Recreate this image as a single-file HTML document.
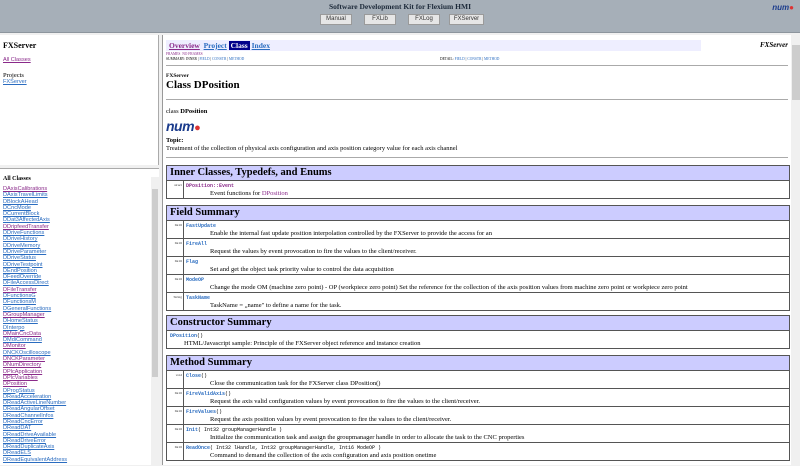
<!DOCTYPE html>
<html><head><meta charset="utf-8"><style>
*{margin:0;padding:0;box-sizing:border-box}
body{width:800px;height:465px;overflow:hidden;background:#f0f0f0;font-family:"Liberation Serif",serif;color:#000;position:relative}
a{color:#2a6cc0}
a.v{color:#8a2a8a}
#hdr{position:absolute;left:0;top:0;width:800px;height:33px;background:#a6afb8;border-bottom:1px solid #8d959d}
#hdr .t{position:absolute;left:0;width:800px;top:2px;text-align:center;font-size:7.5px;font-weight:bold;color:#1d2a3a}
.btn{position:absolute;top:14px;height:11px;width:32px;background:#e6e6e6;border:1px solid #9a9a9a;font-family:"Liberation Sans",sans-serif;font-size:6px;text-align:center;line-height:9px;color:#333}
#lt{position:absolute;left:0;top:35px;width:159px;height:130px;background:#fff;border-right:1px solid #aaa}
#lb{position:absolute;left:0;top:168px;width:159px;height:297px;background:#fff;border-top:1px solid #aaa}
#rt{position:absolute;left:162px;top:35px;width:638px;height:430px;background:#fff;border-left:1px solid #999}
.sb{position:absolute;background:#f0f0f0}
.th{position:absolute;background:#cdcdcd}
.cls{position:absolute;left:3px;top:17px;font-family:"Liberation Sans",sans-serif;font-size:5.6px;line-height:6.3px}
.cls div{color:#2a6cc0;text-decoration:underline}
.cls div.v{color:#8a2a8a}
table{border-collapse:collapse;width:624px;position:absolute;left:3px;background:#fff}
td{border:1.5px solid #555;font-size:6.5px;vertical-align:top}
td.h{background:#ccccff;font-size:10.5px;font-weight:bold;height:15px;padding:0 3px;line-height:14px}
td.k{width:17px;font-size:3.5px;text-align:right;padding:2px 1px;color:#333}
td.d{height:17px;padding:1px 2px;line-height:7px}
td.d .c{font-family:"Liberation Mono",monospace;font-size:5px}
td.d .c a{font-weight:bold}
td.d p{padding-left:24px;font-size:6.5px}
hr{position:absolute;left:3px;width:622px;border:0;border-top:1.5px solid #aaa}
</style></head><body>
<div id="hdr"><div class="t">Software Development Kit for Flexium HMI</div>
<div class="btn" style="left:320px">Manual</div>
<div class="btn" style="left:364px">FXLib</div>
<div class="btn" style="left:408px">FXLog</div>
<div class="btn" style="left:449px;width:35px">FXServer</div>
<div style="position:absolute;right:6px;top:3px;font:italic bold 8px 'Liberation Sans',sans-serif;color:#1a3b8c">num<span style="color:#d33">●</span></div>
</div>
<div id="lt">
<div style="position:absolute;left:3px;top:6px;font-size:8px;font-weight:bold">FXServer</div>
<div style="position:absolute;left:3px;top:22px;font-family:'Liberation Sans',sans-serif;font-size:5.6px;color:#8a2a8a;text-decoration:underline">All Classes</div>
<div style="position:absolute;left:3px;top:37px;font-size:6.5px">Projects</div>
<div style="position:absolute;left:3px;top:44px;font-family:'Liberation Sans',sans-serif;font-size:5.6px;color:#2a6cc0;text-decoration:underline">FXServer</div>
</div>
<div id="lb">
<div style="position:absolute;left:3px;top:7px;font-size:6px;font-weight:bold">All Classes</div>
<div class="cls">
<div class="v">DAxisCalibrations</div><div>DAxisTravelLimits</div><div>DBlockAHead</div><div>DCncMode</div><div>DCurrentBlock</div><div>DDat3AffectedAxis</div><div class="v">DDripfeedTransfer</div><div>DDriveFunctions</div><div>DDriveHistory</div><div>DDriveMemory</div><div>DDriveParameter</div><div>DDriveStatus</div><div>DDriveTestpoint</div><div>DEndPosition</div><div>DFeedOverride</div><div>DFileAccessDirect</div><div class="v">DFileTransfer</div><div>DFunctionsG</div><div>DFunctionsM</div><div>DGeneralFunctions</div><div class="v">DGroupManager</div><div>DHomeStatus</div><div>DInterpo</div><div class="v">DMainCncData</div><div>DMdiCommand</div><div class="v">DMonitor</div><div>DNCKOscilloscope</div><div class="v">DNCKParameter</div><div class="v">DNumDirectory</div><div class="v">DPlcApplication</div><div class="v">DPlcVariables</div><div class="v">DPosition</div><div>DProgStatus</div><div>DReadAcceleration</div><div>DReadActiveLineNumber</div><div>DReadAngularOffset</div><div>DReadChannelInfos</div><div>DReadCncError</div><div>DReadDAT</div><div>DReadDriveAvailable</div><div>DReadDriveError</div><div>DReadDuplicateAxis</div><div>DReadELS</div><div>DReadEquivalentAddress</div>
</div>
<div class="sb" style="left:151px;top:8px;width:8px;height:289px"></div>
<div class="th" style="left:152px;top:20px;width:6px;height:188px"></div>
</div>
<div id="rt">
<div style="position:absolute;left:3px;top:5px;width:535px;height:11px;background:#eeeeff;font-size:7.5px;font-weight:bold;padding-left:3px;line-height:11px">
<a class="v" href="#">Overview</a>&nbsp; <a href="#">Project</a> <span style="background:#00008b;color:#fff;padding:0 2px">Class</span> <a href="#">Index</a></div>
<div style="position:absolute;right:12px;top:6px;font-size:7px;font-style:italic;font-weight:bold">FXServer</div>
<div style="position:absolute;left:3px;top:17px;font-size:3.6px;line-height:4.5px"><a class="v">FRAMES</a>&nbsp; <a class="v">NO FRAMES</a><br>SUMMARY: INNER | <a>FIELD</a> | <a>CONSTR</a> | <a>METHOD</a></div>
<div style="position:absolute;left:277px;top:21.5px;font-size:3.6px">DETAIL: <a>FIELD</a> | <a>CONSTR</a> | <a>METHOD</a></div>
<hr style="top:30px">
<div style="position:absolute;left:3px;top:38px;font-size:5.5px;font-weight:bold">FXServer</div>
<div style="position:absolute;left:3px;top:44px;font-size:11px;font-weight:bold">Class DPosition</div>
<hr style="top:64px">
<div style="position:absolute;left:3px;top:73px;font-size:6.5px">class <b>DPosition</b></div>
<div style="position:absolute;left:3px;top:83px;font:italic 900 14px 'Liberation Sans',sans-serif;color:#1a3b8c;letter-spacing:-0.5px">num<span style="color:#d33;font-size:11px">●</span></div>
<div style="position:absolute;left:3px;top:102px;font-size:6.5px;font-weight:bold">Topic:</div>
<div style="position:absolute;left:3px;top:110px;font-size:6.5px">Treatment of the collection of physical axis configuration and axis position category value for each axis channel</div>
<hr style="top:122px">

<table style="top:130px"><tr><td class="h" colspan="2">Inner Classes, Typedefs, and Enums</td></tr>
<tr><td class="k">struct</td><td class="d"><span class="c"><a class="v">DPosition::Event</a></span><p>Event functions for <a class="v">DPosition</a></p></td></tr></table>

<table style="top:170px"><tr><td class="h" colspan="2">Field Summary</td></tr>
<tr><td class="k">Int16</td><td class="d"><span class="c"><a>FastUpdate</a></span><p>Enable the internal fast update position interpolation controlled by the FXServer to provide the access for an</p></td></tr>
<tr><td class="k">Int16</td><td class="d"><span class="c"><a>FireAll</a></span><p>Request the values by event provocation to fire the values to the client/receiver.</p></td></tr>
<tr><td class="k">Int16</td><td class="d"><span class="c"><a>Flag</a></span><p>Set and get the object task priority value to control the data acquisition</p></td></tr>
<tr><td class="k">Int16</td><td class="d"><span class="c"><a>ModeOP</a></span><p>Change the mode OM (machine zero point) - OP (workpiece zero point) Set the reference for the collection of the axis position values from machine zero point or workpiece zero point</p></td></tr>
<tr><td class="k">String</td><td class="d"><span class="c"><a>TaskName</a></span><p>TaskName = „name" to define a name for the task.</p></td></tr></table>

<table style="top:280px"><tr><td class="h">Constructor Summary</td></tr>
<tr><td class="d" style="padding-left:3px"><span class="c"><a>DPosition</a>()</span><p style="padding-left:14px">HTML/Javascript sample: Principle of the FXServer object reference and instance creation</p></td></tr></table>

<table style="top:320px"><tr><td class="h" colspan="2">Method Summary</td></tr>
<tr><td class="k">void</td><td class="d"><span class="c"><a>Close</a>()</span><p>Close the communication task for the FXServer class DPosition()</p></td></tr>
<tr><td class="k">Int16</td><td class="d"><span class="c"><a>FireValidAxis</a>()</span><p>Request the axis valid configuration values by event provocation to fire the values to the client/receiver.</p></td></tr>
<tr><td class="k">Int16</td><td class="d"><span class="c"><a>FireValues</a>()</span><p>Request the axis position values by event provocation to fire the values to the client/receiver.</p></td></tr>
<tr><td class="k">Int16</td><td class="d"><span class="c"><a>Init</a>( Int32 groupManagerHandle )</span><p>Initialize the communication task and assign the groupmanager handle in order to allocate the task to the CNC properties</p></td></tr>
<tr><td class="k">Int16</td><td class="d"><span class="c"><a>ReadOnce</a>( Int32 lHandle, Int32 groupManagerHandle, Int16 ModeOP )</span><p>Command to demand the collection of the axis configuration and axis position onetime</p></td></tr></table>

<div class="sb" style="left:628px;top:0;width:10px;height:430px"></div>
<div class="th" style="left:629px;top:10px;width:8px;height:55px"></div>
</div>
</body></html>
